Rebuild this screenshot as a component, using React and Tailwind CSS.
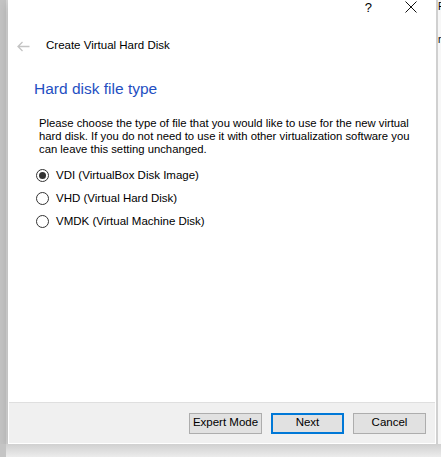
import React from 'react';

const font = { fontFamily: '"Liberation Sans", Arial, sans-serif' };

const Radio = ({ checked, label }) => (
  <label className="flex items-center gap-[7px] h-[23px] text-[11.5px] text-black">
    <span className="w-[13px] h-[13px] rounded-full border border-[#333333] bg-white flex items-center justify-center">
      {checked ? <span className="w-[7px] h-[7px] rounded-full bg-[#333333]" /> : null}
    </span>
    <span>{label}</span>
  </label>
);

const Button = ({ children, primary }) => (
  <button
    className={`w-[73px] h-[21px] shrink-0 whitespace-nowrap bg-[#e1e1e1] text-[11.5px] text-black flex items-center justify-center ${
      primary ? 'border-2 border-[#0078d7]' : 'border border-[#adadad]'
    }`}
  >
    {children}
  </button>
);

export default function App() {
  return (
    <div className="w-[441px] h-[457px] bg-[#d9d9d9] overflow-hidden flex flex-col" style={font}>
      <div className="flex h-[444px]">
        {/* desktop strip on the left */}
        <div className="w-[6px] shrink-0 bg-[#c4c4c4]" />
        <div className="w-[2px] shrink-0 bg-[#d6d6d6]" />

        {/* dialog */}
        <div className="w-[428px] shrink-0 h-[444px] bg-white border border-white shadow-[0_4px_10px_rgba(0,0,0,0.18)] flex flex-col">
          {/* title bar (cropped) */}
          <div className="h-[18px] flex items-start justify-end">
            <span className="text-[13px] leading-[13px] text-black mr-[33px]">?</span>
            <svg width="12" height="12" viewBox="0 0 12 12" className="mr-[18px]">
              <path d="M0.5 0.5 L11.5 11.5 M11.5 0.5 L0.5 11.5" stroke="#111" strokeWidth="1" />
            </svg>
          </div>

          {/* wizard header */}
          <div className="h-[54px] flex items-center">
            <svg width="13" height="11" viewBox="0 0 13 11" className="ml-[8px]">
              <path d="M1 5.5 H12.5 M5.5 1 L1 5.5 L5.5 10" stroke="#c4c4c4" strokeWidth="1.3" fill="none" />
            </svg>
            <span className="ml-[16px] text-[11.5px] text-black">Create Virtual Hard Disk</span>
          </div>

          {/* page */}
          <div className="flex-1 pl-[25px] pr-[10px]">
            <h1 className="text-[15.5px] leading-[22px] text-[#1f4fc2] mt-[5px]">Hard disk file type</h1>
            <p className="mt-[17px] pl-[5px] text-[11.3px] leading-[13px] text-black whitespace-nowrap">
              Please choose the type of file that you would like to use for the new virtual
              <br />
              hard disk. If you do not need to use it with other virtualization software you
              <br />
              can leave this setting unchanged.
            </p>
            <div className="mt-[8px] pl-[2px] flex flex-col">
              <Radio checked label="VDI (VirtualBox Disk Image)" />
              <Radio label="VHD (Virtual Hard Disk)" />
              <Radio label="VMDK (Virtual Machine Disk)" />
            </div>
          </div>

          {/* footer */}
          <div className="h-[41px] bg-[#f0f0f0] border-t border-[#dfdfdf] flex items-center justify-end gap-[9px] pr-[9px]">
            <Button>Expert Mode</Button>
            <Button primary>Next</Button>
            <Button>Cancel</Button>
          </div>
        </div>

        {/* desktop strip on the right */}
        <div className="flex-1 flex">
          <div className="w-[2px] bg-[#d0d0d0]" />
          <div className="flex-1 bg-[#f7f7f7] text-[10px] leading-[11px] text-black overflow-hidden pt-[1px]">
            <div>F</div>
            <div className="mt-[22px]">r</div>
          </div>
        </div>
      </div>
      <div className="flex-1 flex">
        <div className="w-[6px] bg-[#c4c4c4]" />
        <div className="flex-1 bg-gradient-to-b from-[#d0d0d0] to-[#ececec]" />
      </div>
    </div>
  );
}
